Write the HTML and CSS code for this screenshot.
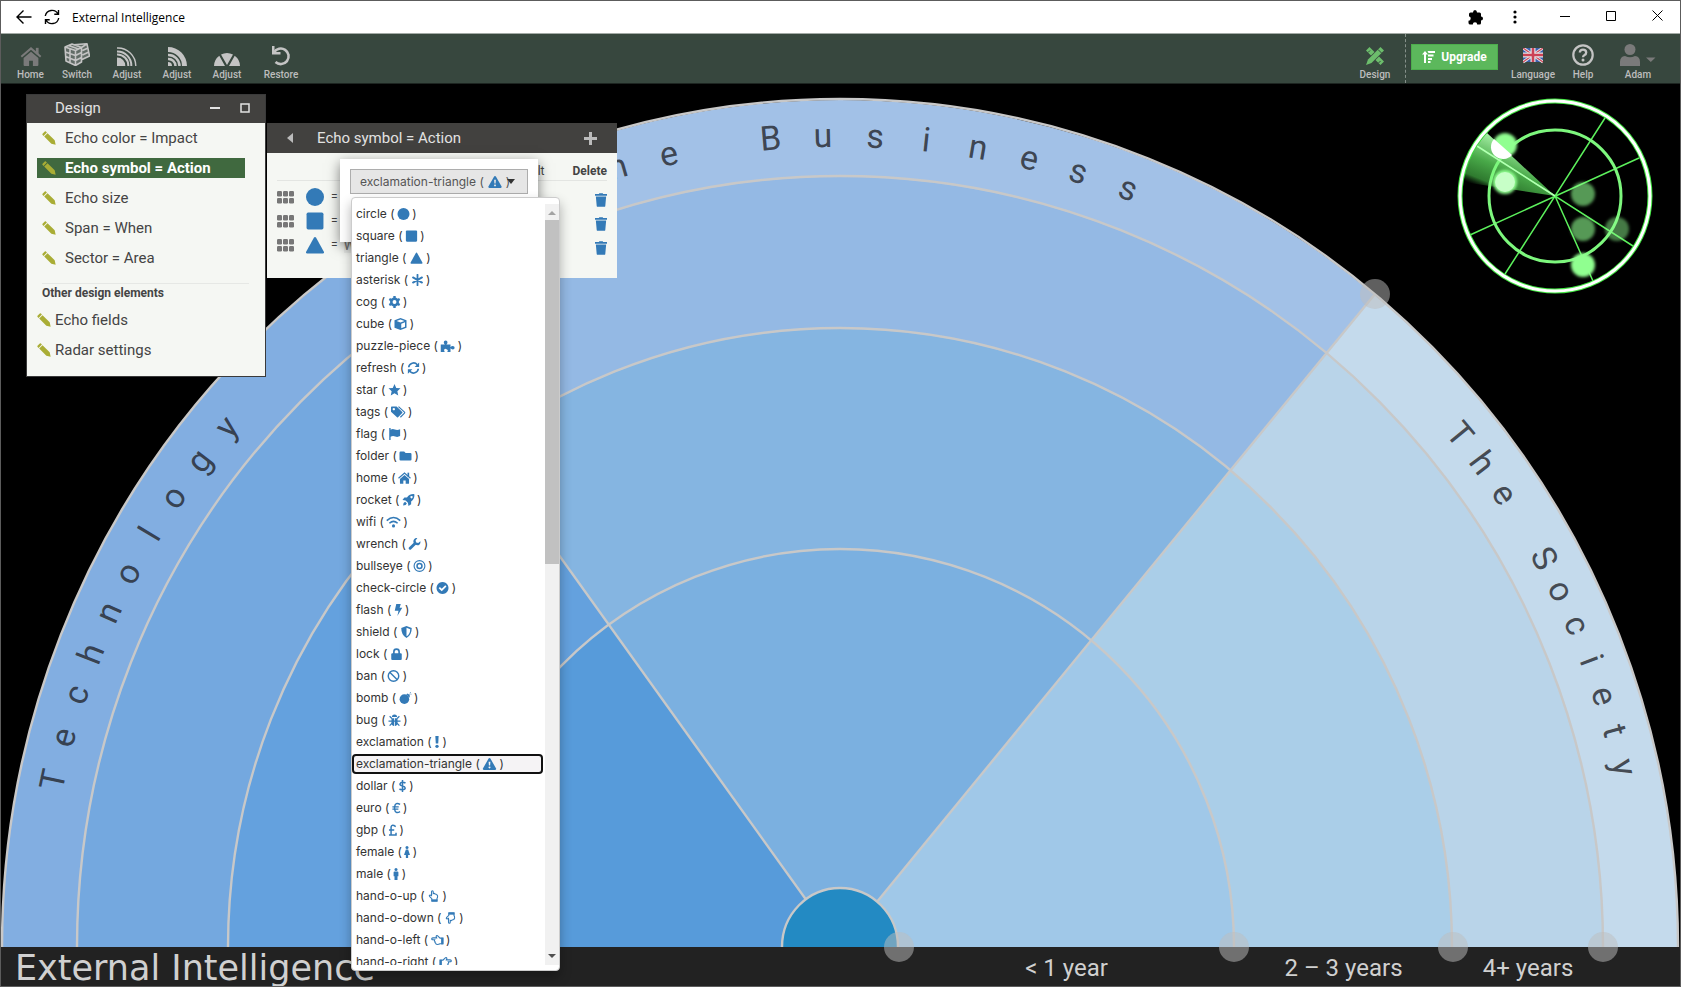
FILE: index.html
```html
<!DOCTYPE html>
<html lang="en">
<head>
<meta charset="utf-8">
<title>External Intelligence</title>
<meta name="viewport" content="width=device-width, initial-scale=1">
<link rel="stylesheet" href="styles.css">
</head>
<body>
<svg class="sprite" aria-hidden="true">
  <symbol id="pencil" viewBox="0 0 16 16"><path d="M.6 3.2 3.2.6Q3.8 0 4.5.7L5.6 1.8 1.8 5.6.7 4.5Q0 3.8.6 3.2ZM2.5 6.3 6.3 2.5l8.2 8.2 1.1 4.9-4.9-1.1Z"/></symbol>
  <symbol id="circle" viewBox="0 0 16 16"><circle cx="8" cy="8" r="8"/></symbol>
  <symbol id="square" viewBox="0 0 16 16"><rect x=".5" y=".5" width="15" height="15" rx="1.4"/></symbol>
  <symbol id="triangle" viewBox="0 0 16 16"><path d="M8 .8Q8.6.8 9 1.5L16 14.2Q16.2 15.5 15 15.5H1Q-.2 15.5 0 14.2L7 1.5Q7.4.8 8 .8Z"/></symbol>
  <symbol id="asterisk" viewBox="0 0 16 16"><path d="M8 1v14M2 4.5l12 7M2 11.5l12-7" stroke="currentColor" stroke-width="2.4" stroke-linecap="round"/></symbol>
  <symbol id="cog" viewBox="0 0 16 16"><circle cx="8" cy="8" r="4.3" fill="none" stroke="currentColor" stroke-width="3.4"/><path d="M6.4 0h3.2v3H6.4zM6.4 13h3.2v3H6.4zM.3 5.4 1.900 2.600 4.500 4.100 2.900 6.900zM14.100 13.400 15.700 10.600 13.100 9.100 11.500 11.900zM15.700 5.400 14.100 2.600 11.500 4.100 13.100 6.900zM1.900 13.400.3 10.600 2.900 9.100 4.500 11.900z"/></symbol>
  <symbol id="cube" viewBox="0 0 16 16"><path fill-rule="evenodd" d="M8 0 16 3v10l-8 3-8-3V3ZM8 2 2.800 3.900 8 5.900l5.200-2ZM9 7.600v6l5-1.900V5.700Z"/></symbol>
  <symbol id="puzzle" viewBox="0 0 20 16"><path d="M1 6h5.500Q5 4.500 5 3q0-2.500 2.500-2.500T10 3q0 1.500-1.500 3H14v3.500q1-1.500 3-1.500 2.500 0 2.500 2.200T17 12.500q-2 0-3-1.500v5H9.500q1-1.200 1-2T8 12t-2.500 2q0 .8 1 2H1Z"/></symbol>
  <symbol id="refresh" viewBox="0 0 16 16"><path d="M1.600 7A6.500 6.500 0 0 1 13 3.600M14.400 9A6.500 6.500 0 0 1 3 12.400" fill="none" stroke="currentColor" stroke-width="2.200"/><path d="M15.500.5v6h-6ZM.5 15.500v-6h6Z"/></symbol>
  <symbol id="star" viewBox="0 0 16 16"><path d="m8 0 2.300 5.200 5.700.6-4.200 3.800 1.200 5.800L8 12.400l-5 3 1.200-5.800L0 5.800l5.700-.6Z"/></symbol>
  <symbol id="tags" viewBox="0 0 20 16"><path fill-rule="evenodd" d="M0 1.500Q0 .5 1 .5h6.500L15 8q.7.700 0 1.400l-5.600 5.600q-.7.700-1.400 0L0 7.500ZM3.700 2.500a1.600 1.600 0 1 0 .1 0Z"/><path d="m10 .8 8 7.300q.7.700 0 1.400l-5.500 5.500" fill="none" stroke="currentColor" stroke-width="1.500"/></symbol>
  <symbol id="flag" viewBox="0 0 16 16"><path d="M1 0h1.800v2.200Q5.500.8 8.500 2T15.500 1.800v9Q12 12.600 9 11.300T2.800 11.500V16H1Z"/></symbol>
  <symbol id="folder" viewBox="0 0 16 16"><path d="M0 3.500Q0 2 1.500 2h4.700l2 2h6.300Q16 4 16 5.500v7q0 1.500-1.500 1.500h-13Q0 14 0 12.500Z"/></symbol>
  <symbol id="home" viewBox="0 0 20 18"><path d="M10 4.500 17 10.500V17q0 1-1 1h-4.200v-5H8.200v5H4q-1 0-1-1v-6.500Z"/><path d="M14.600.8h2.600v6h-2.600z"/><path d="m.8 9.300 9.200-8 9.200 8" fill="none" stroke="currentColor" stroke-width="1.900"/></symbol>
  <symbol id="rocket" viewBox="0 0 16 16"><path fill-rule="evenodd" d="M15.800.2Q16.500 6 11.500 10v3.500L8 16l-.8-4.200L4.200 8.800 0 8l2.500-3.500H6Q10-.5 15.800.2ZM12 2.800a1.400 1.400 0 1 0 .1 0ZM.8 15.200Q.8 11 3.500 10.200l2.300 2.300Q5 15.200.8 15.200Z"/></symbol>
  <symbol id="wifi" viewBox="0 0 20 16"><g fill="none" stroke="currentColor" stroke-width="2.100"><path d="M1 6.200q9-8.400 18 0M4.500 9.700q5.500-5 11 0"/></g><circle cx="10" cy="13.200" r="2.100"/></symbol>
  <symbol id="wrench" viewBox="0 0 16 16"><path d="m2.200 13.800 6.500-6.500" stroke="currentColor" stroke-width="3.800" stroke-linecap="round"/><path d="M11.800.2 9.500 3l.6 2.900 2.900.6 2.800-2.300q.8 3.800-2.300 5.300-2.500.8-4.500-.7L7 6.500Q5.800 4.200 7.300 1.900 9-.2 11.800.2Z"/></symbol>
  <symbol id="bullseye" viewBox="0 0 16 16"><g fill="none" stroke="currentColor"><circle cx="8" cy="8" r="7.200" stroke-width="1.500"/><circle cx="8" cy="8" r="3.300" stroke-width="2"/></g></symbol>
  <symbol id="check-circle" viewBox="0 0 16 16"><path fill-rule="evenodd" d="M8 0a8 8 0 1 0 .01 0ZM2.900 8.200 4.500 6.600 7 9 11.700 4.300 13.300 5.900 7 12.200Z"/></symbol>
  <symbol id="flash" viewBox="0 0 10 16"><path d="M2 0h6L6.500 5H10L3.500 16 5 9H0Z"/></symbol>
  <symbol id="shield" viewBox="0 0 16 16"><path fill-rule="evenodd" d="M8 0 15 2.800Q15 12.500 8 16 1 12.500 1 2.800ZM8 2.200v11.500Q12.800 11 13 4.200Z"/></symbol>
  <symbol id="lock" viewBox="0 0 16 16"><path d="M4.500 8V5a3.500 3.500 0 0 1 7 0v3" fill="none" stroke="currentColor" stroke-width="2.200"/><rect x="1" y="7" width="14" height="9" rx="1.500"/></symbol>
  <symbol id="ban" viewBox="0 0 16 16"><g fill="none" stroke="currentColor" stroke-width="1.900"><circle cx="8" cy="8" r="7"/><path d="m3 3 10 10"/></g></symbol>
  <symbol id="bomb" viewBox="0 0 16 16"><circle cx="6.500" cy="9.500" r="6.400"/><path d="m9 3 2-1 3 3-1 2.500Z"/><path d="m12 4 1.800-1.800M14.500.2v1M15.800 3h-1" stroke="currentColor" stroke-width="1.200"/></symbol>
  <symbol id="bug" viewBox="0 0 16 16"><path d="M4.500 4a3.500 3.500 0 0 1 7 0ZM4 5.500h3.500V16Q4 15.500 4 12ZM8.500 5.500H12V12q0 3.500-3.500 4Z"/><path d="M1.500 3 4.500 6M14.500 3l-3 3M0 9.500h16M1.500 15.500 5 12M14.500 15.500 11 12" stroke="currentColor" stroke-width="1.600"/></symbol>
  <symbol id="exclamation" viewBox="0 0 6 16"><path d="M.8 0h4.400L4.600 10H1.400Z"/><circle cx="3" cy="13.700" r="2.200"/></symbol>
  <symbol id="warning" viewBox="0 0 18 16"><path fill-rule="evenodd" d="M9 0q.8 0 1.200.8L17.800 14q.6 1.800-1.200 2H1.400Q-.4 15.800.2 14L7.800.8Q8.200 0 9 0ZM7.800 5l.4 5h1.600l.4-5ZM9 11.200a1.300 1.300 0 1 0 .01 0Z"/></symbol>
  <symbol id="dollar" viewBox="0 0 10 16"><path d="M9 4.200Q7.500 2.900 5 2.900T1.600 5.200Q1.600 7.200 5 7.900T8.600 10.700Q8.600 13 5 13T1 11.700M5 0v16" fill="none" stroke="currentColor" stroke-width="2"/></symbol>
  <symbol id="euro" viewBox="0 0 11 16"><path d="M10.300 3.200Q4-.5 2.900 6.500v3Q4 16.500 10.300 12.800M0 6.500h8.500M0 9.500h8" fill="none" stroke="currentColor" stroke-width="1.900"/></symbol>
  <symbol id="gbp" viewBox="0 0 11 16"><path d="M9.800 3.500Q4.500-.2 3.600 4v10M.8 14.500h9.400v-3M.8 8h7" fill="none" stroke="currentColor" stroke-width="2"/></symbol>
  <symbol id="female" viewBox="0 0 8 16"><circle cx="4" cy="2" r="2"/><path d="M2.500 4.500h3L8 12H5.500v4h-3v-4H0Z"/></symbol>
  <symbol id="male" viewBox="0 0 8 16"><circle cx="4" cy="2" r="2"/><path d="M2 4.500h4q1.200 0 1.200 1.200V11H6v5H2v-5H.8V5.700Q.8 4.500 2 4.500Z"/></symbol>
  <symbol id="hand" viewBox="0 0 18 16"><path d="M1.500 5.500h4L9 2q1.800-.8 1.800 1.300L10.200 5h5.300q1.500 0 1.500 1.300T15.500 7.600H13q1 1.400-.5 2.600.4 1.500-1 2.300-.2 1.700-2 1.700-2.500 0-4-1H1.500Z" fill="none" stroke="currentColor" stroke-width="1.600"/><path d="M1 5h3v9H1z"/></symbol>
  <symbol id="hand-up" viewBox="0 0 16 18"><path d="M5.500 16.500v-3.500L2 9.500Q1 7.800 3 7.600L5 8.500V2.500Q5 1 6.300 1t1.300 1.500V5.500q1.500-1 2.600.5 1.600-.4 2.300 1 1.700 0 1.700 2 0 2.500-1 4v3.500Z" fill="none" stroke="currentColor" stroke-width="1.600"/><path d="M5 14h9v3.500H5z"/></symbol>
  <symbol id="trash" viewBox="0 0 14 16"><path d="M0 1h4.500L5 0h4l.5 1H14v2H0ZM1 4h12l-1 11q-.1 1-1 1H3q-.9 0-1-1Z"/></symbol>
  <symbol id="grip" viewBox="0 0 17 13"><rect width="5" height="5.500" rx="1.200"/><rect x="6" width="5" height="5.500" rx="1.200"/><rect x="12" width="5" height="5.500" rx="1.200"/><rect y="7" width="5" height="5.500" rx="1.200"/><rect x="6" y="7" width="5" height="5.500" rx="1.200"/><rect x="12" y="7" width="5" height="5.500" rx="1.200"/></symbol>
</svg>

<header class="titlebar">
  <button class="plain" aria-label="Back"><svg width="16" height="16" fill="none" stroke="currentColor" stroke-width="1.400"><path d="M15.500 8H1M7.500 1.500 1 8l6.500 6.500"/></svg></button>
  <button class="plain" aria-label="Reload"><svg width="16" height="16" fill="none" stroke="currentColor" stroke-width="1.400"><path d="M1.300 7A6.800 6.800 0 0 1 14 5M14.700 9A6.800 6.800 0 0 1 2 11M14.500 1v4.300h-4.200M1.500 15v-4.300h4.200"/></svg></button>
  <span class="window-title">External Intelligence</span>
  <div class="browser-controls">
    <button class="plain" aria-label="Extensions"><svg width="15" height="15" viewBox="0 0 15 15"><path d="M1 4q0-1.500 1.500-1.500H5Q5 0 7 0t2 2.500h2.500Q13 2.500 13 4v2.500q2 0 2 2t-2 2V13q0 1.500-1.500 1.500H9.200q0-2.200-2.200-2.200t-2.200 2.200H2.500Q.5 14.500.5 13v-2.300q2.200 0 2.200-2.200T1 6.500Z"/></svg></button>
    <button class="plain" aria-label="Menu"><svg width="4" height="14"><circle cx="2" cy="2" r="1.600"/><circle cx="2" cy="7" r="1.600"/><circle cx="2" cy="12" r="1.600"/></svg></button>
  </div>
  <div class="window-controls">
    <button class="plain" aria-label="Minimize"><svg width="10" height="10"><path d="M0 5h10v1H0z"/></svg></button>
    <button class="plain" aria-label="Maximize"><svg width="10" height="10" fill="none" stroke="currentColor"><path d="M.5.5h9v9h-9z"/></svg></button>
    <button class="plain" aria-label="Close"><svg width="11" height="11" fill="none" stroke="currentColor"><path d="m.5.5 10 10M10.500.5l-10 10"/></svg></button>
  </div>
</header>

<nav class="toolbar">
  <button class="tool tool-home"><svg class="tool-icon dim" width="22" height="19"><use href="#home"/></svg>Home</button>
  <button class="tool tool-wide"><svg class="tool-icon" width="26" height="23" viewBox="0 0 26 23"><path d="M1 4 8 1 23 .5 25.500 13 17 17.500V19L11.500 22.500 2 18Z" opacity=".3"/><g fill="none" stroke="currentColor" stroke-width="1.600" stroke-linejoin="round"><path d="M1 4 11.500 7.500V22.500L2 18ZM11.500 7.500 17.500 4.500V19L11.500 22.500M1 4 8 1 17.500 4.500M6 5.700V20M1.500 9 11.500 12.500 17.500 9.500M1.800 13.500 11.500 17.500 17.500 14.500M4.500 2.500 14.500 6M10 1.800 23 .8 25.500 13 18 16.500M17.500 4.500 23 .8M18.500 7.500 24 5M18.500 12 24.800 9"/></g></svg>Switch</button>
  <button class="tool tool-wide"><svg class="tool-icon" width="20" height="19" viewBox="0 0 20 19"><path d="M0 10.500a8 8 0 0 1 8.300 8.500H0Z"/><path d="M0 7.500a11 11 0 0 1 11.300 11.500M0 4.500a14 14 0 0 1 14.300 14.500" fill="none" stroke="currentColor" stroke-width="2"/><path d="M0 1a18 18 0 0 1 18.800 18" fill="none" stroke="currentColor" stroke-width="1.400"/></svg>Adjust</button>
  <button class="tool tool-wide"><svg class="tool-icon" width="19" height="19" viewBox="0 0 19 19"><path d="M0 0a19 19 0 0 1 19 19h-5A14 14 0 0 0 0 5Z"/><path d="M0 8a11 11 0 0 1 11.500 11M0 12a7 7 0 0 1 7.500 7" fill="none" stroke="currentColor" stroke-width="2.500"/><path d="M0 15a4 4 0 0 1 4 4H0Z"/></svg>Adjust</button>
  <button class="tool tool-wide"><svg class="tool-icon" width="26" height="13" viewBox="0 0 26 13"><path d="M0 13A13 13 0 0 1 5.300 2.800L11 13ZM26 13A13 13 0 0 0 20.700 2.800L15 13ZM7 1.600a13 13 0 0 1 12 0L13 12Z"/></svg>Adjust</button>
  <button class="tool tool-restore"><svg class="tool-icon" width="20" height="20" viewBox="0 0 20 20"><path d="M3 6.500A7.800 7.800 0 1 1 4.500 16" fill="none" stroke="currentColor" stroke-width="2.600"/><path d="M1 0v8.500h8.500V6H3.500V0Z"/></svg>Restore</button>

  <div class="toolbar-right">
    <button class="tool tool-design"><svg class="tool-icon green" width="20" height="20" viewBox="0 0 20 20"><path d="m1 4.500 3.500-3.500 5 5L6 9.500ZM10.500 14 14 10.500l5 5-3.500 3.500Z"/><path d="M15.500 1 19 4.500 6.500 17 1 19l2-5.500Z"/><path d="m3 6.500 2-2M13.500 17l2-2M13 3.500 16.500 7" stroke="#37473e" stroke-width="1"/></svg>Design</button>
    <div class="toolbar-account">
      <button class="upgrade"><svg width="13" height="12" viewBox="0 0 13 12"><path d="M3 0 6 3.500H4V12H2V3.500H0ZM5.500 0H13v2H6.500ZM6 3.500h5.500v2H6ZM6 7h4v2H6ZM6 10h2.500v2H6Z"/></svg>Upgrade</button>
      <button class="tool tool-wide"><svg class="tool-icon" width="20" height="18" viewBox="0 0 20 18"><path fill="#3b5fae" d="M0 0h20v14H0z"/><path d="m0 0 20 14M20 0 0 14" stroke="#e6e6e6" stroke-width="3"/><path d="m0 0 20 14M20 0 0 14" stroke="#d0475a" stroke-width="1.200"/><path d="M10 0v14M0 7h20" stroke="#e6e6e6" stroke-width="5"/><path d="M10 0v14M0 7h20" stroke="#cc4356" stroke-width="2.600"/></svg>Language</button>
      <button class="tool tool-wide"><svg class="tool-icon" width="22" height="22" viewBox="0 0 22 22" fill="none"><circle cx="11" cy="11" r="9.700" stroke="currentColor" stroke-width="2.200"/><path d="M7.800 8.500Q8 5.700 11 5.700t3.200 2.700q0 1.600-1.600 2.500T11 13.200" stroke="currentColor" stroke-width="2.300"/><circle cx="11" cy="16" r="1.500" fill="currentColor"/></svg>Help</button>
      <button class="tool tool-user"><svg class="tool-icon dim" width="50" height="22" viewBox="-7 0 50 22"><circle cx="10" cy="5.500" r="5.500"/><path d="M0 22v-4q0-5.500 5-6 5 2.500 10 0 5 .5 5 6v4ZM26 13.500h9.500L30.800 18Z"/></svg>Adam</button>
    </div>
  </div>
</nav>

<main class="stage">
  <svg class="chart" viewBox="0 0 1679 862" preserveAspectRatio="xMidYMax meet" role="img" aria-label="Radar">
    <defs>
      <clipPath id="dome"><path d="M0 0H1679V862H0Z"/></clipPath>
      <clipPath id="sector-technology"><path d="M839 862 146-104H-10V862Z"/></clipPath>
      <clipPath id="sector-business"><path d="M839 862 146-104 1641-117Z"/></clipPath>
      <clipPath id="sector-society"><path d="M839 862 1641-117H1700V862Z"/></clipPath>
    </defs>
    <g clip-path="url(#sector-technology)">
      <ellipse cx="839" cy="862" rx="838" ry="847" fill="#82aee1"/><ellipse cx="839" cy="862" rx="763" ry="770" fill="#74a8df"/><ellipse cx="839" cy="862" rx="612" ry="618" fill="#64a1de"/><ellipse cx="839" cy="862" rx="394" ry="398" fill="#579bda"/>
    </g>
    <g clip-path="url(#sector-business)">
      <ellipse cx="839" cy="862" rx="838" ry="847" fill="#a2c1e7"/><ellipse cx="839" cy="862" rx="763" ry="770" fill="#94b9e4"/><ellipse cx="839" cy="862" rx="612" ry="618" fill="#85b5e1"/><ellipse cx="839" cy="862" rx="394" ry="398" fill="#7bb0e0"/>
    </g>
    <g clip-path="url(#sector-society)">
      <ellipse cx="839" cy="862" rx="838" ry="847" fill="#c4daec"/><ellipse cx="839" cy="862" rx="763" ry="770" fill="#b9d4e9"/><ellipse cx="839" cy="862" rx="612" ry="618" fill="#aacee8"/><ellipse cx="839" cy="862" rx="394" ry="398" fill="#a0c8e8"/>
    </g>
    <g class="grid-lines" clip-path="url(#dome)">
      <path d="M839 862 347 176M839 862 1374 209"/>
      <ellipse cx="839" cy="862" rx="838" ry="848"/><ellipse cx="839" cy="862" rx="763" ry="771"/><ellipse cx="839" cy="862" rx="612" ry="619"/><ellipse cx="839" cy="862" rx="394" ry="398"/>
      <ellipse class="core" cx="839" cy="862" rx="58" ry="59"/>
    </g>
    <g class="sector-name">
      <text x="839" y="69" transform="rotate(-78 839 862)">T</text><text x="839" y="69" transform="rotate(-74.900 839 862)">e</text><text x="839" y="69" transform="rotate(-71.700 839 862)">c</text><text x="839" y="69" transform="rotate(-68.600 839 862)">h</text><text x="839" y="69" transform="rotate(-65.400 839 862)">n</text><text x="839" y="69" transform="rotate(-62.300 839 862)">o</text><text x="839" y="69" transform="rotate(-59.100 839 862)">l</text><text x="839" y="69" transform="rotate(-56 839 862)">o</text><text x="839" y="69" transform="rotate(-52.800 839 862)">g</text><text x="839" y="69" transform="rotate(-49.700 839 862)">y</text>
    </g>
    <g class="sector-name">
      <text x="839" y="62" transform="rotate(-19.600 839 862)">T</text><text x="839" y="62" transform="rotate(-15.900 839 862)">h</text><text x="839" y="62" transform="rotate(-12.200 839 862)">e</text><text x="839" y="62" transform="rotate(-4.900 839 862)">B</text><text x="839" y="62" transform="rotate(-1.200 839 862)">u</text><text x="839" y="62" transform="rotate(2.500 839 862)">s</text><text x="839" y="62" transform="rotate(6.100 839 862)">i</text><text x="839" y="62" transform="rotate(9.800 839 862)">n</text><text x="839" y="62" transform="rotate(13.500 839 862)">e</text><text x="839" y="62" transform="rotate(17.100 839 862)">s</text><text x="839" y="62" transform="rotate(20.800 839 862)">s</text>
    </g>
    <g class="sector-name">
      <text x="839" y="69" transform="rotate(50.400 839 862)">T</text><text x="839" y="69" transform="rotate(53 839 862)">h</text><text x="839" y="69" transform="rotate(55.700 839 862)">e</text><text x="839" y="69" transform="rotate(61.100 839 862)">S</text><text x="839" y="69" transform="rotate(63.700 839 862)">o</text><text x="839" y="69" transform="rotate(66.400 839 862)">c</text><text x="839" y="69" transform="rotate(69.100 839 862)">i</text><text x="839" y="69" transform="rotate(71.800 839 862)">e</text><text x="839" y="69" transform="rotate(74.400 839 862)">t</text><text x="839" y="69" transform="rotate(77.100 839 862)">y</text>
    </g>
    <g class="handles">
      <circle cx="1374" cy="209" r="15"/><circle cx="898" cy="862" r="15"/><circle cx="1233" cy="862" r="15"/><circle cx="1452" cy="862" r="15"/><circle cx="1602" cy="862" r="15"/>
    </g>
  </svg>

  <svg class="scope" viewBox="-100 -100 200 200" role="img" aria-label="Radar scope">
    <defs>
      <linearGradient id="sweep" gradientUnits="userSpaceOnUse" x1="-68" y1="-63" x2="-88" y2="-14"><stop offset="0" stop-color="#a6f0a6"/><stop offset=".5" stop-color="#49a949"/><stop offset=".85" stop-color="#3b993b" stop-opacity=".8"/><stop offset="1" stop-color="#2a702a" stop-opacity="0"/></linearGradient>
      <filter id="glow" x="-50%" y="-50%" width="200%" height="200%"><feGaussianBlur stdDeviation="1.500"/></filter>
    </defs>
    <path d="M0 0-68-63A93 93 0 0 0-92-14Z" fill="url(#sweep)"/>
    <path d="m50-78-100 156M84-38-85 39M-78-50 78 50M0 0l38 85" stroke="#5cf05c" stroke-width="1.500"/>
    <circle r="66" fill="none" stroke="#7df77d" stroke-width="3"/>
    <g fill="#90ff90" filter="url(#glow)"><circle cx="-50" cy="-51" r="12"/><circle cx="-50" cy="-14" r="12"/><circle cx="28" cy="69" r="12"/><g opacity=".6"><circle cx="28" cy="-2" r="12"/><circle cx="28" cy="33" r="12"/><circle cx="62" cy="33" r="12" opacity=".8"/></g></g>
    <path d="M-61-57A12 12 0 0 0-43-41Z" fill="#fff"/><circle cx="-50" cy="-14" r="10" fill="#d5ffd5" opacity=".8"/>
    <path d="M-78-50 0 0" stroke="#b5ffb5" stroke-width="1.500"/>
    <circle r="95" fill="none" stroke="#42e642" stroke-width="5"/><circle r="95" fill="none" stroke="#fff" stroke-width="3"/>
  </svg>

  <section class="panel panel-design">
    <header class="panel-head">
      <h2 class="panel-title">Design</h2>
      <button class="plain head-button" aria-label="Collapse"><svg width="10" height="10"><path d="M0 4h10v2H0z"/></svg></button>
      <button class="plain head-button" aria-label="Expand"><svg width="10" height="10" fill="none" stroke="currentColor" stroke-width="1.500"><path d="M1 1h8v8H1z"/></svg></button>
    </header>
    <div class="panel-body">
      <ul class="design-list">
        <li><button class="design-item"><svg class="pencil"><use href="#pencil"/></svg>Echo color = Impact</button></li>
        <li><button class="design-item selected"><svg class="pencil"><use href="#pencil"/></svg>Echo symbol = Action</button></li>
        <li><button class="design-item"><svg class="pencil"><use href="#pencil"/></svg>Echo size</button></li>
        <li><button class="design-item"><svg class="pencil"><use href="#pencil"/></svg>Span = When</button></li>
        <li><button class="design-item"><svg class="pencil"><use href="#pencil"/></svg>Sector = Area</button></li>
      </ul>
      <h3 class="group-title">Other design elements</h3>
      <ul class="design-list other">
        <li><button class="design-item"><svg class="pencil"><use href="#pencil"/></svg>Echo fields</button></li>
        <li><button class="design-item"><svg class="pencil"><use href="#pencil"/></svg>Radar settings</button></li>
      </ul>
    </div>
  </section>

  <section class="panel panel-symbol">
    <header class="panel-head symbol-head">
      <button class="plain back-button" aria-label="Back"><svg width="6" height="10"><path d="M6 0v10L0 5Z"/></svg></button>
      <h2 class="panel-title">Echo symbol = Action</h2>
      <button class="plain add-button" aria-label="Add"><svg width="13" height="13"><path d="M5 0h3v5h5v3H8v5H5V8H0V5h5Z"/></svg></button>
    </header>
    <div class="symbol-body">
      <div class="symbol-columns"><span class="default-column">Default</span><span>Delete</span></div>
      <div class="symbol-row"><svg class="grip" width="17" height="13"><use href="#grip"/></svg><svg class="blue" width="18" height="18"><use href="#circle"/></svg><span>=</span><button class="plain trash" aria-label="Delete circle"><svg width="12" height="14"><use href="#trash"/></svg></button></div>
      <div class="symbol-row"><svg class="grip" width="17" height="13"><use href="#grip"/></svg><svg class="blue" width="18" height="18"><use href="#square"/></svg><span>=</span><button class="plain trash" aria-label="Delete square"><svg width="12" height="14"><use href="#trash"/></svg></button></div>
      <div class="symbol-row"><svg class="grip" width="17" height="13"><use href="#grip"/></svg><svg class="blue" width="18" height="18"><use href="#triangle"/></svg><span>=</span><span class="value">W</span><button class="plain trash" aria-label="Delete triangle"><svg width="12" height="14"><use href="#trash"/></svg></button></div>
    </div>

    <div class="popover">
      <button class="picker" aria-haspopup="listbox" aria-expanded="true"><span>exclamation-triangle (</span><svg class="blue" width="14" height="12"><use href="#warning"/></svg><span>)</span><svg class="caret" width="8" height="5"><path d="M0 0h8L4 5Z"/></svg></button>
    </div>
    <div class="menu">
      <ul class="options" role="listbox" aria-label="Symbol">
        <li role="option">circle ( <svg class="icon"><use href="#circle"/></svg> )</li>
        <li role="option">square ( <svg class="icon"><use href="#square"/></svg> )</li>
        <li role="option">triangle ( <svg class="icon wide"><use href="#triangle"/></svg> )</li>
        <li role="option">asterisk ( <svg class="icon"><use href="#asterisk"/></svg> )</li>
        <li role="option">cog ( <svg class="icon"><use href="#cog"/></svg> )</li>
        <li role="option">cube ( <svg class="icon"><use href="#cube"/></svg> )</li>
        <li role="option">puzzle-piece ( <svg class="icon wide"><use href="#puzzle"/></svg> )</li>
        <li role="option">refresh ( <svg class="icon"><use href="#refresh"/></svg> )</li>
        <li role="option">star ( <svg class="icon"><use href="#star"/></svg> )</li>
        <li role="option">tags ( <svg class="icon wide"><use href="#tags"/></svg> )</li>
        <li role="option">flag ( <svg class="icon"><use href="#flag"/></svg> )</li>
        <li role="option">folder ( <svg class="icon"><use href="#folder"/></svg> )</li>
        <li role="option">home ( <svg class="icon"><use href="#home"/></svg> )</li>
        <li role="option">rocket ( <svg class="icon"><use href="#rocket"/></svg> )</li>
        <li role="option">wifi ( <svg class="icon wide"><use href="#wifi"/></svg> )</li>
        <li role="option">wrench ( <svg class="icon"><use href="#wrench"/></svg> )</li>
        <li role="option">bullseye ( <svg class="icon"><use href="#bullseye"/></svg> )</li>
        <li role="option">check-circle ( <svg class="icon"><use href="#check-circle"/></svg> )</li>
        <li role="option">flash ( <svg class="icon narrow"><use href="#flash"/></svg> )</li>
        <li role="option">shield ( <svg class="icon"><use href="#shield"/></svg> )</li>
        <li role="option">lock ( <svg class="icon"><use href="#lock"/></svg> )</li>
        <li role="option">ban ( <svg class="icon"><use href="#ban"/></svg> )</li>
        <li role="option">bomb ( <svg class="icon"><use href="#bomb"/></svg> )</li>
        <li role="option">bug ( <svg class="icon"><use href="#bug"/></svg> )</li>
        <li role="option">exclamation ( <svg class="icon thin"><use href="#exclamation"/></svg> )</li>
        <li role="option" class="current" aria-selected="true">exclamation-triangle ( <svg class="icon wide"><use href="#warning"/></svg> )</li>
        <li role="option">dollar ( <svg class="icon narrow"><use href="#dollar"/></svg> )</li>
        <li role="option">euro ( <svg class="icon narrow"><use href="#euro"/></svg> )</li>
        <li role="option">gbp ( <svg class="icon narrow"><use href="#gbp"/></svg> )</li>
        <li role="option">female ( <svg class="icon thin"><use href="#female"/></svg> )</li>
        <li role="option">male ( <svg class="icon thin"><use href="#male"/></svg> )</li>
        <li role="option">hand-o-up ( <svg class="icon"><use href="#hand-up"/></svg> )</li>
        <li role="option">hand-o-down ( <svg class="icon flip-y"><use href="#hand-up"/></svg> )</li>
        <li role="option">hand-o-left ( <svg class="icon flip-x"><use href="#hand"/></svg> )</li>
        <li role="option">hand-o-right ( <svg class="icon"><use href="#hand"/></svg> )</li>
      </ul>
      <div class="rail" aria-hidden="true">
        <svg width="8" height="4"><path d="M4 0 8 4H0Z" fill="#a3a3a3"/></svg>
        <div class="thumb"></div>
        <svg width="8" height="4"><path d="M0 0h8L4 4Z" fill="#505050"/></svg>
      </div>
    </div>
  </section>
</main>

<footer class="axis">
  <h1 class="radar-title">External Intelligence</h1>
  <span>&lt; 1 year</span>
  <span>2 – 3 years</span>
  <span>4+ years</span>
</footer>
</body>
</html>
```
FILE: styles.css
```css
* { box-sizing: border-box; }

body {
  margin: 0;
  height: 100vh;
  display: flex;
  flex-direction: column;
  overflow: hidden;
  background: #000;
  border: 1px solid #5c5c5c;
  font-family: Roboto, "Open Sans", sans-serif;
  color: #444;
}

button { font: inherit; color: inherit; cursor: pointer; }
svg { fill: currentColor; flex: none; }
svg[fill="none"] { fill: none; }
ul { list-style: none; margin: 0; padding: 0; }
h1, h2, h3 { margin: 0; font-weight: 400; }

.sprite { position: absolute; width: 0; height: 0; }

.plain {
  display: inline-flex;
  align-items: center;
  justify-content: center;
  padding: 0;
  border: 0;
  background: none;
}

/* window title bar */
.titlebar {
  display: flex;
  align-items: center;
  gap: 12px;
  height: 33px;
  flex: none;
  padding: 0 17px 0 15px;
  background: #fff;
  border-bottom: 1px solid #a3aaa5;
  color: #000;
}
.window-title { font: 12px "Open Sans", sans-serif; }
.browser-controls {
  display: flex;
  align-items: center;
  gap: 30px;
  margin-left: auto;
}
.window-controls {
  display: flex;
  align-items: center;
  gap: 36px;
  margin-left: 31px;
  padding-bottom: 3px;
}

/* toolbar */
.toolbar {
  display: flex;
  height: 50px;
  flex: none;
  padding: 0 12px 0 8px;
  background: #37473e;
  border-bottom: 1px solid #1d2521;
  color: #bdbdbd;
}
.tool {
  display: flex;
  flex-direction: column;
  align-items: center;
  justify-content: flex-end;
  gap: 3px;
  padding: 0 0 2px;
  border: 0;
  background: none;
  font-size: 10px;
  font-weight: 500;
  line-height: 12px;
}
.tool-home { width: 43px; }
.tool-wide { width: 50px; }
.tool-restore { width: 58px; }
.tool-design { width: 60px; }
.tool-user { width: 60px; }
.tool-icon { color: #c4c4c4; }
.tool-icon.dim { color: #7a7a7a; }
.tool-icon.green { color: #6cbd6c; }
.toolbar-right { display: flex; margin-left: auto; }
.toolbar-account {
  display: flex;
  padding-left: 5px;
  border-left: 1px dashed #85908a;
}
.upgrade {
  display: flex;
  align-items: center;
  justify-content: center;
  gap: 6px;
  width: 87px;
  height: 26px;
  margin: 10px 10px 0 0;
  padding: 0;
  border: 1px solid #4cae4c;
  background: #5cb85c;
  color: #fff;
  font-size: 12px;
  font-weight: 700;
}

/* radar */
.stage {
  position: relative;
  z-index: 1;
  flex: 1;
  min-height: 0;
}
.chart {
  display: block;
  width: 100%;
  height: 100%;
  overflow: visible;
}
.grid-lines { fill: none; stroke: #c8c8c8; stroke-width: 2.4; }
.core { fill: #238ac3; }
.sector-name {
  fill: rgba(34, 36, 42, 0.8);
  font-size: 34px;
  text-anchor: middle;
}
.handles { fill: rgba(190, 190, 190, 0.5); }
.scope {
  position: absolute;
  top: 12px;
  right: 25px;
  width: 200px;
  height: 200px;
}

/* floating panels */
.panel { position: absolute; }
.panel-head {
  display: flex;
  align-items: center;
  background: #42413f;
  color: #e2e2e2;
}
.panel-title { font-size: 15px; line-height: 20px; }

.panel-design {
  top: 10px;
  left: 25px;
  width: 240px;
  border: 1px solid #3a3a3a;
  background: #f5f7f3;
}
.panel-design .panel-head { height: 28px; padding: 0 15px 2px 28px; }
.panel-design .panel-title { flex: 1; }
.head-button + .head-button { margin-left: 20px; }
.panel-body { padding: 5px 16px 16px 10px; }
.design-list { display: flex; flex-direction: column; gap: 10px; }
.design-item {
  display: flex;
  align-items: center;
  gap: 9px;
  width: 208px;
  height: 20px;
  padding: 0 5px;
  border: 0;
  background: none;
  font-size: 15px;
  line-height: 20px;
  white-space: nowrap;
}
.design-item.selected { background: #40693f; color: #fff; font-weight: 700; }
.pencil { width: 14px; height: 14px; color: #a9ad35; }
.group-title {
  margin: 15px 0 8px 5px;
  border-top: 1px solid #e6e8e5;
  font-size: 12px;
  line-height: 18px;
  font-weight: 700;
}
.other .design-item { gap: 4px; padding: 0; }

.panel-symbol {
  top: 39px;
  left: 266px;
  width: 350px;
  background: #f5f7f3;
}
.symbol-head { height: 30px; padding: 0 20px; }
.back-button { margin-right: 24px; color: #bbb; }
.add-button { margin-left: auto; color: #bbb; }
.symbol-body { padding: 8px 10px 21px; }
.symbol-columns {
  display: flex;
  justify-content: flex-end;
  gap: 28px;
  height: 20px;
  border-bottom: 1px solid #e3e5e2;
  font-size: 12px;
  line-height: 20px;
  font-weight: 700;
}
.default-column { font-weight: 400; }
.symbol-row {
  display: flex;
  align-items: center;
  height: 24px;
  font-size: 12px;
}
.symbol-row:nth-child(2) { margin-top: 4px; }
.grip { margin-right: 12px; color: #777; }
.symbol-row > span { margin-left: 7px; }
.symbol-row > .value { margin-left: 6px; background: #e9ebe8; color: #777; font-size: 14px; }
.blue { color: #337ab7; }
.trash { margin-left: auto; padding-top: 5px; color: #337ab7; }

.popover {
  position: absolute;
  top: 36px;
  left: 73px;
  width: 198px;
  height: 83px;
  padding: 10px;
  background: #fff;
  box-shadow: 0 4px 12px rgba(0, 0, 0, 0.5);
}
.picker {
  display: flex;
  align-items: center;
  gap: 4px;
  width: 100%;
  height: 25px;
  padding: 0 9px;
  border: 1px solid #adadad;
  background: #e6e6e6;
  color: #555;
  font-family: Inter, sans-serif;
  font-size: 12px;
  white-space: nowrap;
}
.caret { margin-left: -7px; color: #333; }

.menu {
  position: absolute;
  top: 74px;
  left: 84px;
  display: flex;
  width: 209px;
  height: calc(100vh - 213px);
  padding: 6px 0 5px;
  border: 1px solid #ccc;
  border-radius: 4px;
  background: #fff;
  box-shadow: 0 6px 12px rgba(0, 0, 0, 0.3);
}
.options {
  flex: 1;
  min-width: 0;
  overflow: hidden;
  font-family: Inter, sans-serif;
  font-size: 12px;
  line-height: 18px;
}
.options li {
  height: 20px;
  margin: 0 2px 2px 0;
  padding: 1px 4px;
  white-space: nowrap;
  color: #333;
}
.options .current {
  padding: 0 2px;
  border: 2px solid #111;
  border-radius: 4px;
  background: #f5f3f5;
  line-height: 16px;
}
.icon {
  width: 13px;
  height: 12px;
  margin: 0 -1px;
  vertical-align: -2px;
  color: #337ab7;
}
.icon.wide { width: 15px; }
.icon.narrow { width: 9px; }
.icon.thin { width: 6px; }
.flip-x { transform: scaleX(-1); }
.flip-y { transform: scaleY(-1); }
.rail {
  display: flex;
  flex-direction: column;
  justify-content: space-between;
  align-items: center;
  width: 14px;
  padding: 7px 0;
  background: #f1f1f1;
}
.thumb { width: 100%; height: 46%; margin: 5px 0 auto; background: #c1c1c1; }

/* axis */
.axis {
  display: grid;
  grid-template-columns: 898fr 335fr 219fr 150fr 77fr;
  align-items: center;
  height: 39px;
  flex: none;
  padding-top: 2px;
  background: #222;
  color: #d0d0d0;
  font-size: 24px;
  line-height: 36px;
  text-align: center;
  white-space: nowrap;
}
.radar-title {
  padding-left: 14px;
  font-family: "DejaVu Sans", sans-serif;
  font-size: 35px;
  line-height: 36px;
  text-align: left;
}
```
